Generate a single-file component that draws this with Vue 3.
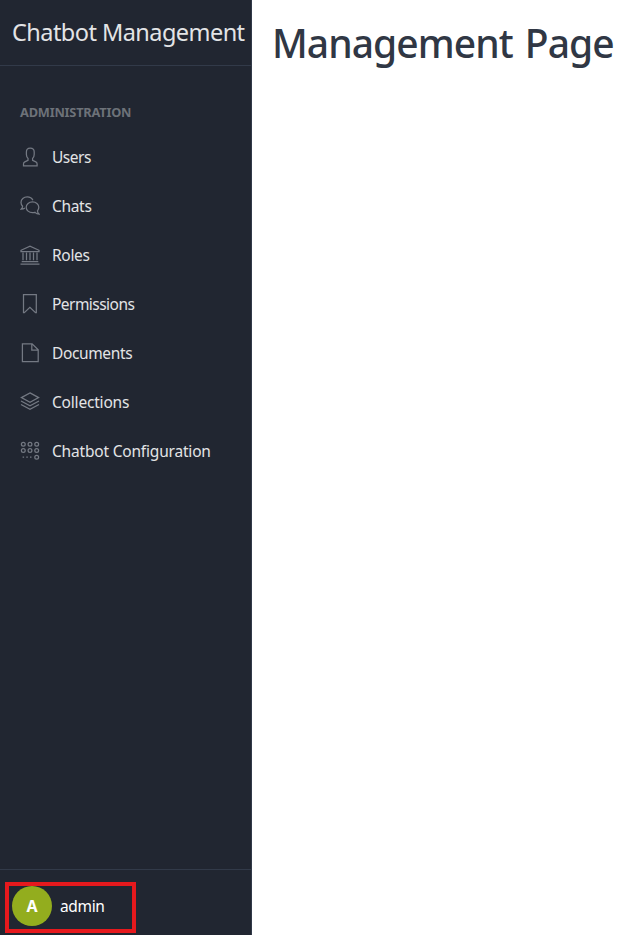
<script setup>
const items = [
  { label: 'Users', icon: 'user', cls: 'users' },
  { label: 'Chats', icon: 'chat', cls: 'chats' },
  { label: 'Roles', icon: 'bank', cls: 'roles' },
  { label: 'Permissions', icon: 'bookmark', cls: 'permissions' },
  { label: 'Documents', icon: 'file', cls: 'documents' },
  { label: 'Collections', icon: 'layers', cls: 'collections' },
  { label: 'Chatbot Configuration', icon: 'grid', cls: 'configuration' },
]
const dots = [
  [3.3, 3.2], [10, 3.2], [16.7, 3.2],
  [3.3, 9.5], [10, 9.5], [16.7, 9.5], [16.7, 16.2],
]
</script>

<template>
  <div class="layout">
    <aside class="sidebar">
      <header class="brand"><span class="brand-name">Chatbot Management</span></header>
      <nav class="nav">
        <div class="nav-title"><span>ADMINISTRATION</span></div>
        <a v-for="item in items" :key="item.label" class="nav-link">
          <svg class="icon" viewBox="0 0 20 20">
            <path v-if="item.icon === 'user'" d="M10.200 1.200C7.800 1.200 6.400 2.800 6.400 5.100v2.500c0 1.600.6 2.900 1.600 3.800v1.900l-3.200 1.600c-.8.4-1.300 1.100-1.300 2v1.900h13.600v-1.900c0-.9-.5-1.600-1.300-2l-3.200-1.600v-1.900c1-.9 1.600-2.200 1.600-3.800V5.100c0-2.300-1.500-3.900-4-3.900z" />
            <g v-else-if="item.icon === 'chat'">
              <path d="M12.900 4.200C11.900 2.100 9.800.9 7.300.9 3.700.9 1 3.400 1 6.500c0 1.500.6 2.800 1.600 3.800 0 1.200-.5 2-1.500 2.900 1.600 0 2.900-.4 3.900-1.100" />
              <path d="M12.500 5.900c-3.500 0-6.300 2.400-6.300 5.400s2.800 5.400 6.300 5.400c.9 0 1.700-.1 2.500-.4 1.200 1.300 2.500 1.900 4.200 1.900-1.200-1-1.800-2.100-1.700-3.400.8-1 1.300-2.100 1.300-3.500 0-3-2.800-5.400-6.300-5.400z" />
            </g>
            <g v-else-if="item.icon === 'bank'">
              <path d="M1 6.500V5.300L10 1.200l9 4.100v1.200zM.5 19h19M1.700 16.500h16.600" />
              <path d="M3 7.500v7.700M6.500 7.500v7.700M10 7.500v7.700M13.500 7.500v7.700M17 7.500v7.700" />
            </g>
            <path v-else-if="item.icon === 'bookmark'" d="M3.500.6h12.800v18h-.8L9.900 13.400l-5.600 5.200h-.8z" />
            <path v-else-if="item.icon === 'file'" d="M2.400.9h9.700l6.100 5.900v11.700H2.400zM11.800 1.200v5.800h6" />
            <g v-else-if="item.icon === 'layers'">
              <path d="M10 .9l8.600 4.700L10 10.400 1.400 5.600z" />
              <path d="M1 9l9 4.800L19 9M1 12.500l9 4.900 9-4.900" />
            </g>
            <g v-else>
              <circle v-for="(d, i) in dots" :key="i" :cx="d[0]" :cy="d[1]" r="1.900" />
              <path d="M2.600 16.200h1.500M6.300 16.200h1.500M10 16.200h1.500" />
            </g>
          </svg>
          <span :class="['label', item.cls]">{{ item.label }}</span>
        </a>
      </nav>
      <footer class="account">
        <div class="account-box">
          <div class="avatar">A</div>
          <span class="account-name">admin</span>
        </div>
      </footer>
    </aside>
    <main class="content">
      <h1>Management Page</h1>
    </main>
  </div>
</template>

<style>
body { margin: 0; background: #fff; }
</style>

<style scoped>
.layout {
  display: flex;
  height: 935px;
  overflow: hidden;
  font-family: "Noto Sans", "Open Sans", sans-serif;
  font-size: 16px;
  line-height: 24px;
}
.sidebar {
  box-sizing: border-box;
  display: flex;
  flex-direction: column;
  flex: 0 0 252px;
  min-width: 0;
  background: #212631;
  border-right: 1px solid #323a49;
  color: #e3e4e6;
  white-space: nowrap;
}
.brand {
  box-sizing: border-box;
  height: 66px;
  padding: 14px 0 0 12px;
  border-bottom: 1px solid #323a49;
  font-size: 23.5px;
  line-height: 36px;
}
.brand-name { letter-spacing: -0.55px; }
.nav { flex: 1; padding: 34px 8px 0; }
.nav-title {
  height: 32.5px;
  padding-left: 12px;
  font-size: 12.8px;
  font-weight: 700;
  color: #6d7279;
  letter-spacing: -0.22px;
}
.nav-link {
  display: flex;
  align-items: center;
  gap: 12px;
  height: 49px;
  padding-left: 12px;
}
.label { font-size: 15.5px; letter-spacing: -0.19px; }
.users { letter-spacing: -0.5px; }
.chats, .roles { letter-spacing: -0.32px; }
.permissions { letter-spacing: -0.54px; }
.documents { letter-spacing: -0.37px; }
.collections { letter-spacing: -0.19px; }
.icon {
  width: 20px;
  height: 20px;
  fill: none;
  stroke: #747983;
  stroke-width: 1.25;
}
.account {
  box-sizing: border-box;
  height: 66px;
  padding: 12px 0 0 5px;
  border-top: 1px solid #323a49;
}
.account-box {
  box-sizing: border-box;
  display: flex;
  align-items: flex-start;
  width: 131px;
  height: 51px;
  padding-left: 3px;
  border: 4px solid #e6191d;
  color: #fff;
}
.avatar {
  width: 40px;
  height: 40px;
  border-radius: 50%;
  background: #93ad1e;
  font-size: 16px;
  font-weight: 700;
  line-height: 40px;
  text-align: center;
}
.account-name { margin-left: 8px; font-size: 15.5px; line-height: 40px; letter-spacing: -0.35px; }
.content { padding: 19px 0 0 20px; }
h1 {
  margin: 0;
  color: #303744;
  font-size: 39px;
  font-weight: 500;
  line-height: 48px;
  letter-spacing: -0.95px;
  word-spacing: 3px;
  white-space: nowrap;
}
</style>
